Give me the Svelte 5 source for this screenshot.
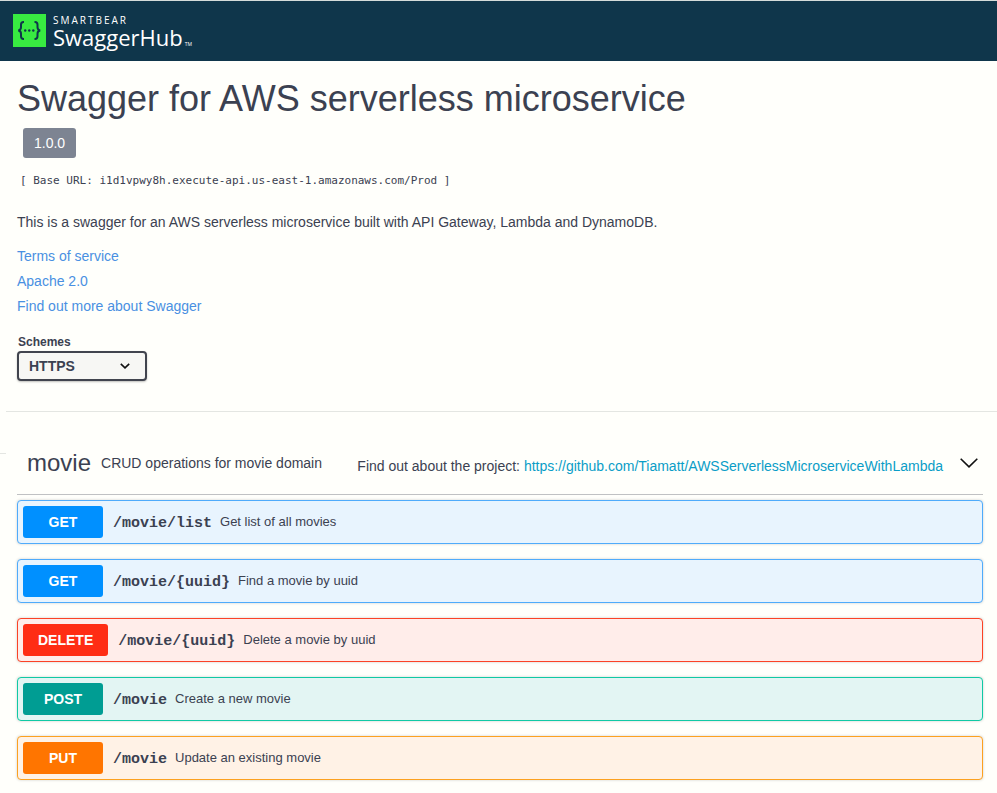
<script>
  const operations = [
    { method: 'get', path: '/movie/list', summary: 'Get list of all movies' },
    { method: 'get', path: '/movie/{uuid}', summary: 'Find a movie by uuid' },
    { method: 'delete', path: '/movie/{uuid}', summary: 'Delete a movie by uuid' },
    { method: 'post', path: '/movie', summary: 'Create a new movie' },
    { method: 'put', path: '/movie', summary: 'Update an existing movie' },
  ];

  const links = ['Terms of service', 'Apache 2.0', 'Find out more about Swagger'];

  let scheme = $state('HTTPS');
  let open = $state(true);
</script>

<header class="topbar">
  <a class="brand" href="#home" aria-label="SmartBear SwaggerHub">
    <svg class="mark" viewBox="0 0 33 33" width="33" height="33" aria-hidden="true">
      <rect width="33" height="33" fill="#38eb41" />
      <g fill="none" stroke="#0f364b" stroke-width="2">
        <path d="M11 8h-.5C8.700 8 8 9 8 10.700v2.600c0 1.800-.8 2.900-2.700 3.200 1.900.3 2.700 1.400 2.700 3.200v2.600C8 24 8.700 25 10.500 25h.5" />
        <path d="M21.500 8h.5c1.800 0 2.500 1 2.500 2.700v2.600c0 1.800.8 2.900 2.700 3.200-1.900.3-2.700 1.400-2.700 3.200v2.600c0 1.700-.7 2.700-2.500 2.700h-.5" />
      </g>
      <g fill="#0f364b">
        <circle cx="12.200" cy="16.500" r="1.200" />
        <circle cx="16.250" cy="16.500" r="1.200" />
        <circle cx="20.300" cy="16.500" r="1.200" />
      </g>
    </svg>
    <span class="wordmark">
      <span class="company">SMARTBEAR</span>
      <span class="product">SwaggerHub<small>TM</small></span>
    </span>
  </a>
</header>

<div class="layout">
  <div class="rail"></div>

  <main>
    <section class="info">
      <h1>Swagger for AWS serverless microservice</h1>
      <span class="version">1.0.0</span>
      <pre class="base">[ Base URL: i1d1vpwy8h.execute-api.us-east-1.amazonaws.com/Prod ]</pre>
      <p>This is a swagger for an AWS serverless microservice built with API Gateway, Lambda and DynamoDB.</p>
      <ul>
        {#each links as link}
          <li><a href="#info">{link}</a></li>
        {/each}
      </ul>

      <div class="schemes">
        <label for="scheme">Schemes</label>
        <div class="select">
          <select id="scheme" bind:value={scheme}>
            <option>HTTPS</option>
          </select>
          <svg viewBox="0 0 10 6" width="10" height="6" aria-hidden="true">
            <path d="M.8.800 5 4.800 9.200.8" fill="none" stroke="#111" stroke-width="1.600" />
          </svg>
        </div>
      </div>
    </section>

    <section class="tag">
      <div class="tag-head">
        <h2>movie</h2>
        <span class="about">CRUD operations for movie domain</span>
        <span class="project">
          Find out about the project:
          <a href="https://github.com/Tiamatt/AWSServerlessMicroserviceWithLambda">https://github.com/Tiamatt/AWSServerlessMicroserviceWithLambda</a>
        </span>
        <button class="toggle" aria-label="Toggle movie operations" aria-expanded={open} onclick={() => (open = !open)}>
          <svg viewBox="0 0 18 10" width="18" height="10" aria-hidden="true">
            <path d="M.7.7 9 8.800 17.300.7" fill="none" stroke="#111" stroke-width="1.600" />
          </svg>
        </button>
      </div>

      {#if open}
        <div class="operations">
          {#each operations as op}
            <div class="op {op.method}">
              <button class="method">{op.method.toUpperCase()}</button>
              <span class="path">{op.path}</span>
              <span class="summary">{op.summary}</span>
            </div>
          {/each}
        </div>
      {/if}
    </section>
  </main>
</div>

<style>
  :global(body) {
    margin: 0;
    background: #fffffb;
    color: #3b4151;
    font: 14px/16px "Liberation Sans", Arial, sans-serif;
  }

  h1, h2, p, ul, pre { margin: 0; padding: 0; font-weight: 400; }
  a { text-decoration: none; }

  .topbar {
    display: flex;
    align-items: flex-start;
    height: 60px;
    padding: 0 13px;
    border-top: 1px solid #d5dcda;
    background: #0f364b;
  }

  .brand { display: flex; gap: 7px; padding-top: 13px; color: #fff; font-family: "Open Sans", sans-serif; }
  .mark { display: block; flex: none; }
  .wordmark { display: flex; flex-direction: column; }
  .company { font-size: 10px; line-height: 12px; font-weight: 400; letter-spacing: 2px; }
  .product { font-size: 22px; line-height: 22px; font-weight: 400; }
  .product small { font-size: 5px; margin-left: 2px; }

  .layout { display: flex; align-items: flex-start; }
  .rail { flex: none; width: 6px; height: 392px; border-bottom: 1px solid #e4e6e2; }
  main { flex: 1; min-width: 0; }

  .info { padding: 17px 14px 30px 11px; border-bottom: 1px solid #e4e6e2; }
  h1 { font-size: 36px; line-height: 42px; }
  .version {
    display: block;
    width: fit-content;
    margin: 8px 0 0 6px;
    padding: 0 11px;
    border-radius: 3px;
    background: #7d8492;
    color: #fff;
    line-height: 30px;
  }
  .base { margin: 15px 0 0 3px; font: 11px/16px "DejaVu Sans Mono", monospace; }
  p { margin-top: 25px; }
  ul { margin-top: 14px; list-style: none; line-height: 25px; }
  ul a { color: #4990e2; }

  .schemes { margin-top: 15px; }
  label { display: block; padding-left: 1px; font-size: 12px; line-height: 16px; font-weight: 700; }
  .select { display: flex; align-items: center; width: 130px; margin-top: 1px; }
  select {
    appearance: none;
    width: 100%;
    height: 30px;
    padding: 0 32px 0 10px;
    border: 2px solid #41444e;
    border-radius: 4px;
    background: #f7f7f4;
    box-shadow: 0 1px 2px rgba(0, 0, 0, 0.25);
    color: #3b4151;
    font: 700 14px/16px "Liberation Sans", Arial, sans-serif;
  }
  .select svg { flex: none; margin-left: -27px; margin-right: 17px; pointer-events: none; }

  .tag { padding: 32px 14px 13px 11px; }
  .tag-head {
    display: flex;
    align-items: center;
    min-height: 38px;
    padding: 0 5px 12px 10px;
    border-bottom: 1px solid #c0c1c3;
  }
  h2 { font-size: 24px; line-height: 28px; }
  .about { margin-left: 10px; }
  .project { margin: 6px 17px 0 auto; }
  .project a { color: #0a9dc7; }
  .toggle { display: flex; padding: 0; border: 0; background: none; }

  .operations { display: flex; flex-direction: column; gap: 15px; margin-top: 5px; }
  .op {
    display: flex;
    align-items: center;
    padding: 5px;
    border: 1px solid var(--edge);
    border-radius: 4px;
    background: var(--fill);
    box-shadow: 0 0 3px rgba(0, 0, 0, 0.19);
  }
  .get { --edge: #4fabfb; --fill: #e8f4fe; --solid: #0090ff; }
  .delete { --edge: #fb4226; --fill: #ffedea; --solid: #ff2d14; }
  .post { --edge: #10c9a4; --fill: #e3f5f3; --solid: #009d93; }
  .put { --edge: #fca120; --fill: #fff2e6; --solid: #ff7500; }

  .method {
    min-width: 80px;
    height: 32px;
    padding: 0 15px;
    border: 0;
    border-radius: 3px;
    background: var(--solid);
    color: #fff;
    font: 700 14px/16px "Liberation Sans", Arial, sans-serif;
  }
  .path { margin-left: 10px; padding-top: 3px; font: 700 15px/18px "Liberation Mono", monospace; }
  .summary { margin-left: 8px; font-size: 13px; }
</style>
